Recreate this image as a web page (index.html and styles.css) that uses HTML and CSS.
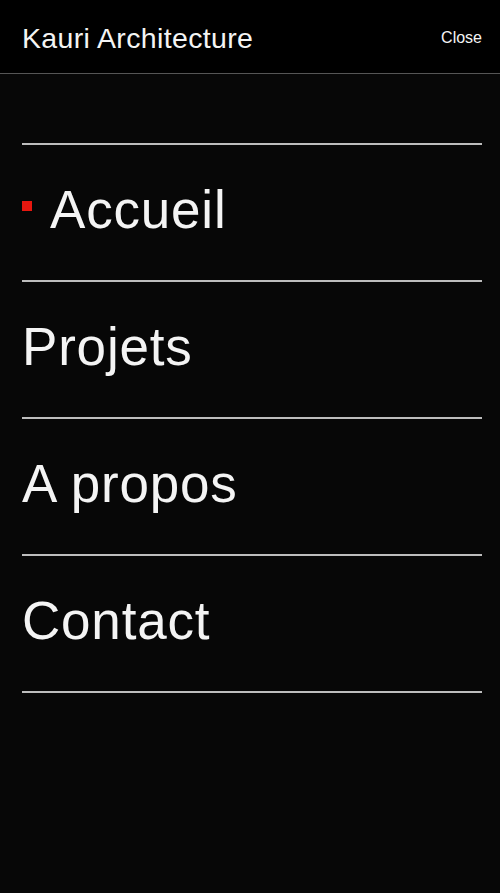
FILE: index.html
```html
<!DOCTYPE html>
<html lang="fr">
  <head>
    <meta charset="UTF-8" />
    <meta name="viewport" content="width=device-width, initial-scale=1.0" />
    <title>Kauri Architecture</title>
    <link rel="stylesheet" href="styles.css">
  </head>
  <body>
    <header class="topbar">
      <a class="brand" href="#">Kauri Architecture</a>
      <button class="close" type="button">Close</button>
    </header>

    <nav class="menu">
      <a class="menu-item active" href="#"><span class="marker"></span>Accueil</a>
      <a class="menu-item" href="#">Projets</a>
      <a class="menu-item" href="#">A propos</a>
      <a class="menu-item" href="#">Contact</a>
    </nav>
  </body>
</html>
```

FILE: styles.css
```css
body {
  margin: 0;
  min-height: 893px;
  background-color: #070707;
  color: #f4f4f4;
  font-family: "Liberation Sans", Arial, sans-serif;
}

a {
  color: inherit;
  text-decoration: none;
}

.topbar {
  height: 73px;
  padding: 0 18px 0 22px;
  display: flex;
  align-items: center;
  justify-content: space-between;
  background-color: #000;
  border-bottom: 1px solid #555;
}

.brand {
  font-size: 28.5px;
  letter-spacing: 0.35px;
  padding-top: 3px;
}

.close {
  padding: 3px 0 0;
  background: none;
  border: none;
  color: #f4f4f4;
  font-family: inherit;
  font-size: 16px;
  cursor: pointer;
}

.menu {
  margin: 69px 18px 0 22px;
  border-bottom: 2px solid #bdbdbd;
}

.menu-item {
  height: 129px;
  padding-bottom: 6px;
  display: flex;
  align-items: center;
  border-top: 2px solid #bdbdbd;
  font-size: 53px;
  letter-spacing: 0.8px;
}

.marker {
  width: 10px;
  height: 10px;
  margin: 0 18px 8px 0;
  background-color: #e8170f;
}
```
